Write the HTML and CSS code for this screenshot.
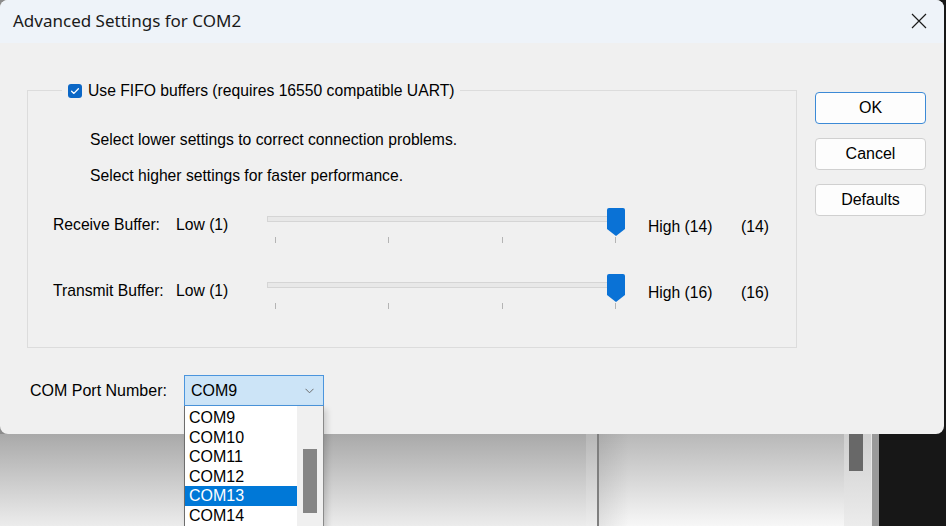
FILE: index.html
```html
<!DOCTYPE html>
<html>
<head>
<meta charset="utf-8">
<link rel="stylesheet" href="styles.css">
</head>
<body>
<div class="dialog">
  <div class="titlebar">
    <span class="title">Advanced Settings for COM2</span>
    <svg class="close" width="16" height="16" viewBox="0 0 16 16"><path d="M1 1L15 15M15 1L1 15" stroke="#1b1b1b" stroke-width="1.2" fill="none"/></svg>
  </div>
  <div class="content">
    <div class="main">
      <div class="group">
        <div class="legend">
          <span class="checkbox"><svg width="14" height="14" viewBox="0 0 14 14"><path d="M3.6 7.3L5.9 9.4L10.4 4.8" stroke="#fff" stroke-width="1.3" fill="none" stroke-linecap="round" stroke-linejoin="round"/></svg></span>
          <span>Use FIFO buffers (requires 16550 compatible UART)</span>
        </div>
        <p class="hint first">Select lower settings to correct connection problems.</p>
        <p class="hint second">Select higher settings for faster performance.</p>
        <div class="row">
          <span class="rlabel">Receive Buffer:</span>
          <span class="low">Low (1)</span>
          <div class="slider">
            <div class="track"></div>
            <div class="ticks"><i></i><i></i><i></i><i></i></div>
            <svg class="thumb" width="18" height="28" viewBox="0 0 18 28"><path d="M2 0H16Q18 0 18 2V21L9 28L0 21V2Q0 0 2 0Z" fill="#0a72d6"/></svg>
          </div>
          <span class="high">High (14)</span>
          <span class="val">(14)</span>
        </div>
        <div class="row second-row">
          <span class="rlabel">Transmit Buffer:</span>
          <span class="low">Low (1)</span>
          <div class="slider">
            <div class="track"></div>
            <div class="ticks"><i></i><i></i><i></i><i></i></div>
            <svg class="thumb" width="18" height="28" viewBox="0 0 18 28"><path d="M2 0H16Q18 0 18 2V21L9 28L0 21V2Q0 0 2 0Z" fill="#0a72d6"/></svg>
          </div>
          <span class="high">High (16)</span>
          <span class="val">(16)</span>
        </div>
      </div>
      <div class="portrow">
        <span class="plabel">COM Port Number:</span>
        <div class="combo">
          <div class="combo-box">
            <span>COM9</span>
            <svg class="chev" width="9" height="6" viewBox="0 0 9 6"><path d="M0.5 0.8L4.5 4.8L8.5 0.8" stroke="#6b6b6b" stroke-width="1" fill="none"/></svg>
          </div>
          <div class="list">
            <div class="items">
              <div class="item">COM9</div>
              <div class="item">COM10</div>
              <div class="item">COM11</div>
              <div class="item">COM12</div>
              <div class="item selected">COM13</div>
              <div class="item">COM14</div>
            </div>
            <div class="scrollbar"><div class="sthumb"></div></div>
          </div>
        </div>
      </div>
    </div>
    <div class="buttons">
      <button class="btn default">OK</button>
      <button class="btn">Cancel</button>
      <button class="btn">Defaults</button>
    </div>
  </div>
</div>
<div class="behind">
  <div class="pane-a"></div>
  <div class="band"></div>
  <div class="divider"></div>
  <div class="pane-b"></div>
  <div class="vscroll"><div class="vthumb"></div></div>
  <div class="gap-light"></div>
  <div class="edge"></div>
  <div class="dark"></div>
</div>
</body>
</html>
```
FILE: styles.css
```css
* { box-sizing: border-box; }
html, body { margin: 0; padding: 0; }
body {
  width: 946px;
  height: 526px;
  overflow: hidden;
  display: flex;
  flex-direction: column;
  background: linear-gradient(to right, #8c8c8c 0 879px, #171717 879px);
  font-family: "Liberation Sans", Arial, sans-serif;
  font-size: 16px;
  color: #000;
}
.dialog {
  position: relative;
  z-index: 2;
  width: 944px;
  height: 434px;
  flex: none;
  background: #f0f0f0;
  border-radius: 8px;
}
.titlebar {
  height: 43px;
  background: #eef3f9;
  border-radius: 8px 8px 0 0;
  display: flex;
  align-items: center;
  justify-content: space-between;
  padding: 0 17px 0 13px;
}
.title {
  font-family: "Noto Sans", "Open Sans", sans-serif;
  font-size: 17px;
  color: #1a1a1a;
  margin-top: -2px;
}
.close { margin-top: -1px; }
.content {
  display: grid;
  grid-template-columns: 770px 111px;
  column-gap: 18px;
  padding: 47px 0 0 27px;
}
.group {
  height: 258px;
  border: 1px solid #dcdcdc;
  font-size: 15.7px;
}
.legend {
  display: flex;
  width: fit-content;
  align-items: center;
  gap: 6px;
  height: 18px;
  line-height: 18px;
  margin: -9px 0 0 34px;
  padding: 0 6px;
  background: #f0f0f0;
}
.checkbox {
  width: 14px;
  height: 14px;
  border-radius: 3px;
  background: #0b67c6;
  display: flex;
}
.hint {
  margin: 0;
  padding-left: 62px;
  line-height: 18px;
}
.hint.first { margin-top: 31px; }
.hint.second { margin-top: 18px; }
.row {
  display: flex;
  align-items: flex-start;
  padding-left: 25px;
  margin-top: 23px;
  height: 36px;
  line-height: 18px;
}
.row.second-row { margin-top: 30px; }
.rlabel { width: 123px; margin-top: 8px; }
.low { width: 91px; margin-top: 8px; }
.high { width: 93px; margin: 10px 0 0 23px; }
.val { margin-top: 10px; }
.slider {
  position: relative;
  width: 358px;
  height: 36px;
}
.track {
  width: 350px;
  height: 6px;
  margin-top: 8px;
  background: #e8e8e8;
  border: 1px solid #d5d5d5;
}
.ticks {
  display: flex;
  justify-content: space-between;
  padding: 0 9px 0 8px;
  margin-top: 15px;
  height: 6px;
}
.ticks i {
  display: block;
  width: 1px;
  height: 6px;
  background: #b4b4b4;
}
.thumb {
  position: absolute;
  top: 0;
  right: 0;
}
.portrow {
  display: flex;
  align-items: center;
  margin-top: 27px;
  height: 31px;
}
.plabel { width: 157px; padding-left: 3px; }
.combo {
  position: relative;
  width: 140px;
}
.combo-box {
  height: 31px;
  background: #cce4f7;
  border: 1px solid #4b95dd;
  display: flex;
  align-items: center;
  justify-content: space-between;
  padding: 0 9px 0 6px;
}
.chev { margin-top: 1px; }
.list {
  position: absolute;
  top: 100%;
  left: 0;
  width: 140px;
  height: 130px;
  background: #fff;
  border-left: 1px solid #6d6d6d;
  border-right: 1px solid #8a8a8a;
  display: flex;
  box-shadow: 3px 3px 6px rgba(0,0,0,0.15);
}
.items {
  width: 112px;
  padding-top: 2px;
}
.item {
  height: 19.5px;
  line-height: 19.5px;
  padding-left: 4px;
}
.item.selected {
  background: #0078d7;
  color: #fff;
}
.scrollbar {
  width: 26px;
  background: #f0f0f0;
  padding: 43px 0 0 6px;
}
.sthumb {
  width: 14px;
  height: 64px;
  background: #858585;
}
.buttons {
  display: flex;
  flex-direction: column;
  gap: 14px;
  margin-top: 2px;
}
.btn {
  width: 111px;
  height: 32px;
  font-family: "Liberation Sans", Arial, sans-serif;
  font-size: 16px;
  color: #000;
  background: #fdfdfd;
  border: 1px solid #d0d0d0;
  border-radius: 4px;
  padding: 0;
}
.btn.default { border-color: #3c8ad6; }
.behind {
  display: flex;
  height: 92px;
  flex: none;
}
.pane-a {
  width: 586px;
  background: linear-gradient(#a9a9a9, #ececec);
}
.band {
  width: 11px;
  background: linear-gradient(#b7b7b7, #ededed);
}
.divider {
  width: 2px;
  background: #7f7f7f;
}
.pane-b {
  width: 245px;
  background: linear-gradient(to right, rgba(0,0,0,0.08), rgba(0,0,0,0) 30px), linear-gradient(#b8b8b8, #f7f7f7);
}
.vscroll {
  width: 27px;
  background: linear-gradient(#cfcfcf, #ececec);
  padding-left: 5px;
}
.vthumb {
  width: 14px;
  height: 37px;
  background: #686868;
}
.gap-light {
  width: 1px;
  background: #e8e8e8;
}
.edge {
  width: 7px;
  background: #9a9a9a;
}
.dark {
  flex: 1;
  background: #171717;
}
```
